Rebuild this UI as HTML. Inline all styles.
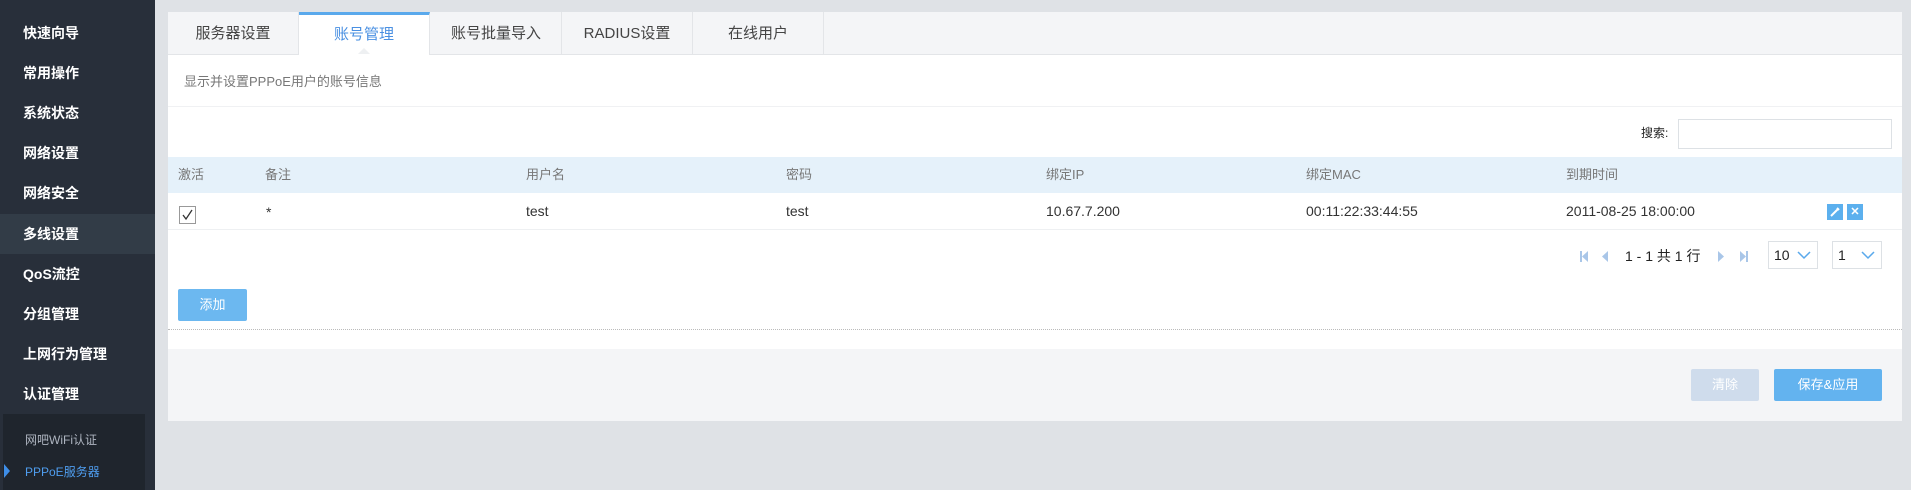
<!DOCTYPE html>
<html><head><meta charset="utf-8"><style>
*{margin:0;padding:0;box-sizing:border-box}
body{width:1911px;height:490px;background:#dfe2e6;font-family:"Liberation Sans","Noto Sans CJK SC",sans-serif;position:relative;overflow:hidden;font-size:14px}
.abs{position:absolute}
#side{left:0;top:0;width:155px;height:490px;background:#282f3a}
.mi{position:absolute;left:23px;color:#fff;font-size:14px;font-weight:bold;line-height:20px}
.t{position:absolute;line-height:18px;white-space:nowrap}
.tab{position:absolute;top:12px;height:42px;width:131px;text-align:center;line-height:44px;font-size:15px;color:#444;border-right:1px solid #e3e5e8}
.ico{position:absolute;width:16px;height:16px;background:#5cb0ee;color:#fff;font-size:11px;text-align:center;line-height:16px;font-weight:bold}
.sel{position:absolute;top:241px;width:50px;height:28px;border:1px solid #dde1e5;background:#fff;font-size:14px;line-height:26px;padding-left:5px;color:#222}
.sel svg{position:absolute;right:6px;top:9px}
</style></head><body>
<div id="side" class="abs">
<div class="abs" style="left:0;top:214px;width:155px;height:40px;background:#323c47"></div>
<div class="mi" style="top:23px">快速向导</div>
<div class="mi" style="top:63px">常用操作</div>
<div class="mi" style="top:103px">系统状态</div>
<div class="mi" style="top:143px">网络设置</div>
<div class="mi" style="top:183px">网络安全</div>
<div class="mi" style="top:224px">多线设置</div>
<div class="mi" style="top:264px">QoS流控</div>
<div class="mi" style="top:304px">分组管理</div>
<div class="mi" style="top:344px">上网行为管理</div>
<div class="mi" style="top:384px">认证管理</div>
<div class="abs" style="left:0;top:414px;width:145px;height:76px;background:#1f252d"></div>
<div class="abs" style="left:0;top:414px;width:3px;height:76px;background:#282f3a"></div>
<div class="t" style="left:25px;top:431px;color:#aeb5c0;font-size:12px">网吧WiFi认证</div>
<div class="t" style="left:25px;top:463px;color:#4f9ef0;font-size:12px">PPPoE服务器</div>
<div class="abs" style="left:4px;top:464px;width:0;height:0;border-top:7px solid transparent;border-bottom:7px solid transparent;border-left:6px solid #3e8ee8"></div>
</div>

<div class="abs" style="left:168px;top:12px;width:1734px;height:409px;background:#f4f5f7"></div>
<div class="abs" style="left:168px;top:54px;width:1734px;height:295px;background:#fff;border-top:1px solid #e3e5e8"></div>
<div class="tab" style="left:168px">服务器设置</div>
<div class="tab" style="left:299px;background:#fff;color:#4a90e2;border-top:3px solid #5aa9ec;height:43px;line-height:40px">账号管理</div>
<div class="abs" style="left:358px;top:48px;width:0;height:0;border-left:6px solid transparent;border-right:6px solid transparent;border-bottom:6px solid #eef0f2"></div>
<div class="tab" style="left:431px">账号批量导入</div>
<div class="tab" style="left:562px">RADIUS设置</div>
<div class="tab" style="left:693px">在线用户</div>

<div class="t" style="left:184px;top:73px;font-size:13px;color:#777">显示并设置PPPoE用户的账号信息</div>
<div class="abs" style="left:168px;top:106px;width:1734px;height:1px;background:#f0f1f3"></div>
<div class="t" style="left:1641px;top:124px;font-size:12px;color:#222">搜索:</div>
<div class="abs" style="left:1678px;top:119px;width:214px;height:30px;border:1px solid #dde1e5;background:#fff"></div>

<div class="abs" style="left:168px;top:157px;width:1734px;height:36px;background:#e5f1fa"></div>
<div class="t" style="top:166px;left:178px;color:#777;font-size:13px">激活</div>
<div class="t" style="top:166px;left:265px;color:#777;font-size:13px">备注</div>
<div class="t" style="top:166px;left:526px;color:#777;font-size:13px">用户名</div>
<div class="t" style="top:166px;left:786px;color:#777;font-size:13px">密码</div>
<div class="t" style="top:166px;left:1046px;color:#777;font-size:13px">绑定IP</div>
<div class="t" style="top:166px;left:1306px;color:#777;font-size:13px">绑定MAC</div>
<div class="t" style="top:166px;left:1566px;color:#777;font-size:13px">到期时间</div>

<div class="abs" style="left:168px;top:229px;width:1734px;height:1px;background:#eef0f2"></div>
<div class="abs" style="left:179px;top:206px;width:17px;height:18px;border:1px solid #999;background:#fff"><svg width="15" height="16"><path d="M3 8 L6 12 L12 3" stroke="#333" stroke-width="1.3" fill="none"/></svg></div>
<div class="t" style="top:203px;left:266px;color:#333">*</div>
<div class="t" style="top:202px;left:526px;color:#333">test</div>
<div class="t" style="top:202px;left:786px;color:#333">test</div>
<div class="t" style="top:202px;left:1046px;color:#333">10.67.7.200</div>
<div class="t" style="top:202px;left:1306px;color:#333">00:11:22:33:44:55</div>
<div class="t" style="top:202px;left:1566px;color:#333">2011-08-25 18:00:00</div>
<div class="ico" style="left:1827px;top:204px"><svg width="16" height="16"><path d="M4 12 L11 5 M10 4 L12 6" stroke="#fff" stroke-width="2"/></svg></div>
<div class="ico" style="left:1847px;top:204px">✕</div>

<svg class="abs" style="left:1578px;top:249px" width="130" height="16">
<rect x="2" y="2" width="2" height="11" fill="#a9c6e8"/><path d="M10 2 L4 7.5 L10 13Z" fill="#a9c6e8"/>
<path d="M30 2 L24 7.5 L30 13Z" fill="#a9c6e8"/>
</svg>
<div class="t" style="left:1625px;top:247px;font-size:14px;color:#222">1 - 1 共 1 行</div>
<svg class="abs" style="left:1714px;top:249px" width="40" height="16">
<path d="M4 2 L10 7.5 L4 13Z" fill="#a9c6e8"/>
<path d="M26 2 L32 7.5 L26 13Z" fill="#a9c6e8"/><rect x="32" y="2" width="2" height="11" fill="#a9c6e8"/>
</svg>
<div class="sel" style="left:1768px">10<svg width="14" height="9"><path d="M1 1 L7 7 L13 1" stroke="#5aa9ec" stroke-width="1.5" fill="none"/></svg></div>
<div class="sel" style="left:1832px">1<svg width="14" height="9"><path d="M1 1 L7 7 L13 1" stroke="#5aa9ec" stroke-width="1.5" fill="none"/></svg></div>

<div class="abs" style="left:178px;top:289px;width:69px;height:32px;background:#6cb8f0;border-radius:2px;color:#fff;text-align:center;line-height:32px;font-size:13px">添加</div>
<div class="abs" style="left:168px;top:329px;width:1734px;height:1px;border-top:1px dotted #bbb"></div>

<div class="abs" style="left:1691px;top:369px;width:68px;height:32px;background:#cfdcec;border-radius:2px;color:#fff;text-align:center;line-height:32px;font-size:13px">清除</div>
<div class="abs" style="left:1774px;top:369px;width:108px;height:32px;background:#63b3ef;border-radius:2px;color:#fff;text-align:center;line-height:32px;font-size:13px">保存&amp;应用</div>
</body></html>
